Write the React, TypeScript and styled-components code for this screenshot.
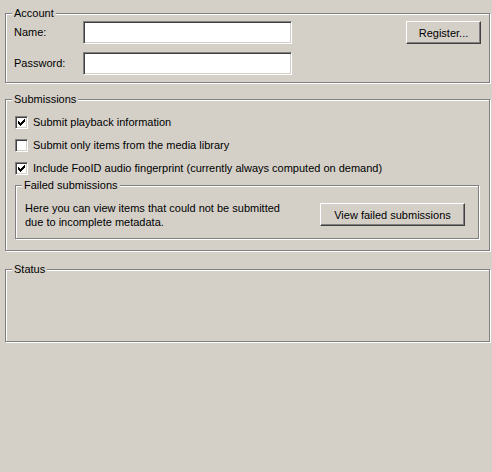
import React from 'react'
import styled, { createGlobalStyle } from 'styled-components'

const GlobalStyle = createGlobalStyle`
	html, body {
		margin: 0;
		height: 100%;
		background: #d4d0c8;
	}
	body {
		font-family: 'Liberation Sans', Arial, sans-serif;
		font-size: 11px;
		color: #000;
	}
`

const Page = styled.div`
	display: flex;
	flex-direction: column;
	width: 485px;
	padding: 13px 0 0 5px;
`

const GroupBox = styled.div<{ $gap?: number; $height?: number }>`
	position: relative;
	box-sizing: border-box;
	margin-top: ${(p) => p.$gap ?? 0}px;
	height: ${(p) => (p.$height ? `${p.$height}px` : 'auto')};
	border: 1px solid #808080;
	box-shadow: inset 1px 1px 0 #fff, 1px 1px 0 #fff;
`

const GroupTitle = styled.span`
	position: absolute;
	top: -7px;
	left: 6px;
	padding: 0 2px;
	line-height: 13px;
	background: #d4d0c8;
	white-space: nowrap;
`

const AccountGrid = styled.div`
	display: grid;
	grid-template-columns: 69px 209px 1fr 75px;
	grid-auto-rows: 23px;
	row-gap: 8px;
	align-items: center;
	padding: 7px 8px;
`

const Label = styled.label`
	line-height: 13px;
`

const TextBox = styled.input`
	box-sizing: border-box;
	width: 100%;
	height: 23px;
	margin: 0;
	padding: 2px 3px;
	font: inherit;
	background: #fff;
	border: 1px solid;
	border-color: #808080 #fff #fff #808080;
	box-shadow: inset 1px 1px 0 #404040, inset -1px -1px 0 #d4d0c8;
	outline: none;
`

const Button = styled.button<{ $width: number }>`
	box-sizing: border-box;
	width: ${(p) => p.$width}px;
	height: 23px;
	margin: 0;
	padding: 0 4px;
	font: inherit;
	color: #000;
	background: #d4d0c8;
	border: 1px solid;
	border-color: #fff #404040 #404040 #fff;
	box-shadow: inset -1px -1px 0 #808080;
	cursor: default;
`

const CheckList = styled.div`
	display: flex;
	flex-direction: column;
	gap: 1px;
	padding: 11px 9px 0;
`

const CheckRow = styled.label`
	display: flex;
	align-items: center;
	gap: 5px;
	height: 22px;
	line-height: 13px;
`

const CheckBox = styled.span`
	box-sizing: border-box;
	display: flex;
	align-items: center;
	justify-content: center;
	width: 13px;
	height: 13px;
	flex: none;
	background: #fff;
	border: 1px solid;
	border-color: #808080 #fff #fff #808080;
	box-shadow: inset 1px 1px 0 #404040, inset -1px -1px 0 #d4d0c8;
`

const SubmissionsBody = styled.div`
	padding-bottom: 11px;
`

const FailedBox = styled(GroupBox)`
	margin: 6px 10px 0 9px;
`

const FailedRow = styled.div`
	display: flex;
	align-items: center;
	justify-content: space-between;
	height: 23px;
	padding: 17px 13px 12px 9px;
`

const FailedText = styled.p`
	margin: 0;
	line-height: 14px;
`

const Check = ({ checked }: { checked: boolean }) => (
	<CheckBox>
		{checked && (
			<svg width='7' height='7' viewBox='0 0 7 7' shapeRendering='crispEdges'>
				<path
					d='M6 0h1v3h-1v1h-1v1h-1v1h-1v1h-1v-1h-1v-1h-1v-3h1v1h1v1h1v-1h1v-1h1z'
					fill='#000'
				/>
			</svg>
		)}
	</CheckBox>
)

const options = [
	{ label: 'Submit playback information', checked: true },
	{ label: 'Submit only items from the media library', checked: false },
	{
		label: 'Include FooID audio fingerprint (currently always computed on demand)',
		checked: true,
	},
]

export default function App() {
	return (
		<>
			<GlobalStyle />
			<Page>
				<GroupBox>
					<GroupTitle>Account</GroupTitle>
					<AccountGrid>
						<Label>Name:</Label>
						<TextBox type='text' />
						<span />
						<Button $width={75}>Register...</Button>
						<Label>Password:</Label>
						<TextBox type='password' />
					</AccountGrid>
				</GroupBox>

				<GroupBox $gap={16}>
					<GroupTitle>Submissions</GroupTitle>
					<SubmissionsBody>
						<CheckList>
							{options.map((o) => (
								<CheckRow key={o.label}>
									<Check checked={o.checked} />
									{o.label}
								</CheckRow>
							))}
						</CheckList>
						<FailedBox>
							<GroupTitle>Failed submissions</GroupTitle>
							<FailedRow>
								<FailedText>
									Here you can view items that could not be submitted
									<br />
									due to incomplete metadata.
								</FailedText>
								<Button $width={145}>View failed submissions</Button>
							</FailedRow>
						</FailedBox>
					</SubmissionsBody>
				</GroupBox>

				<GroupBox $gap={18} $height={73}>
					<GroupTitle>Status</GroupTitle>
				</GroupBox>
			</Page>
		</>
	)
}
